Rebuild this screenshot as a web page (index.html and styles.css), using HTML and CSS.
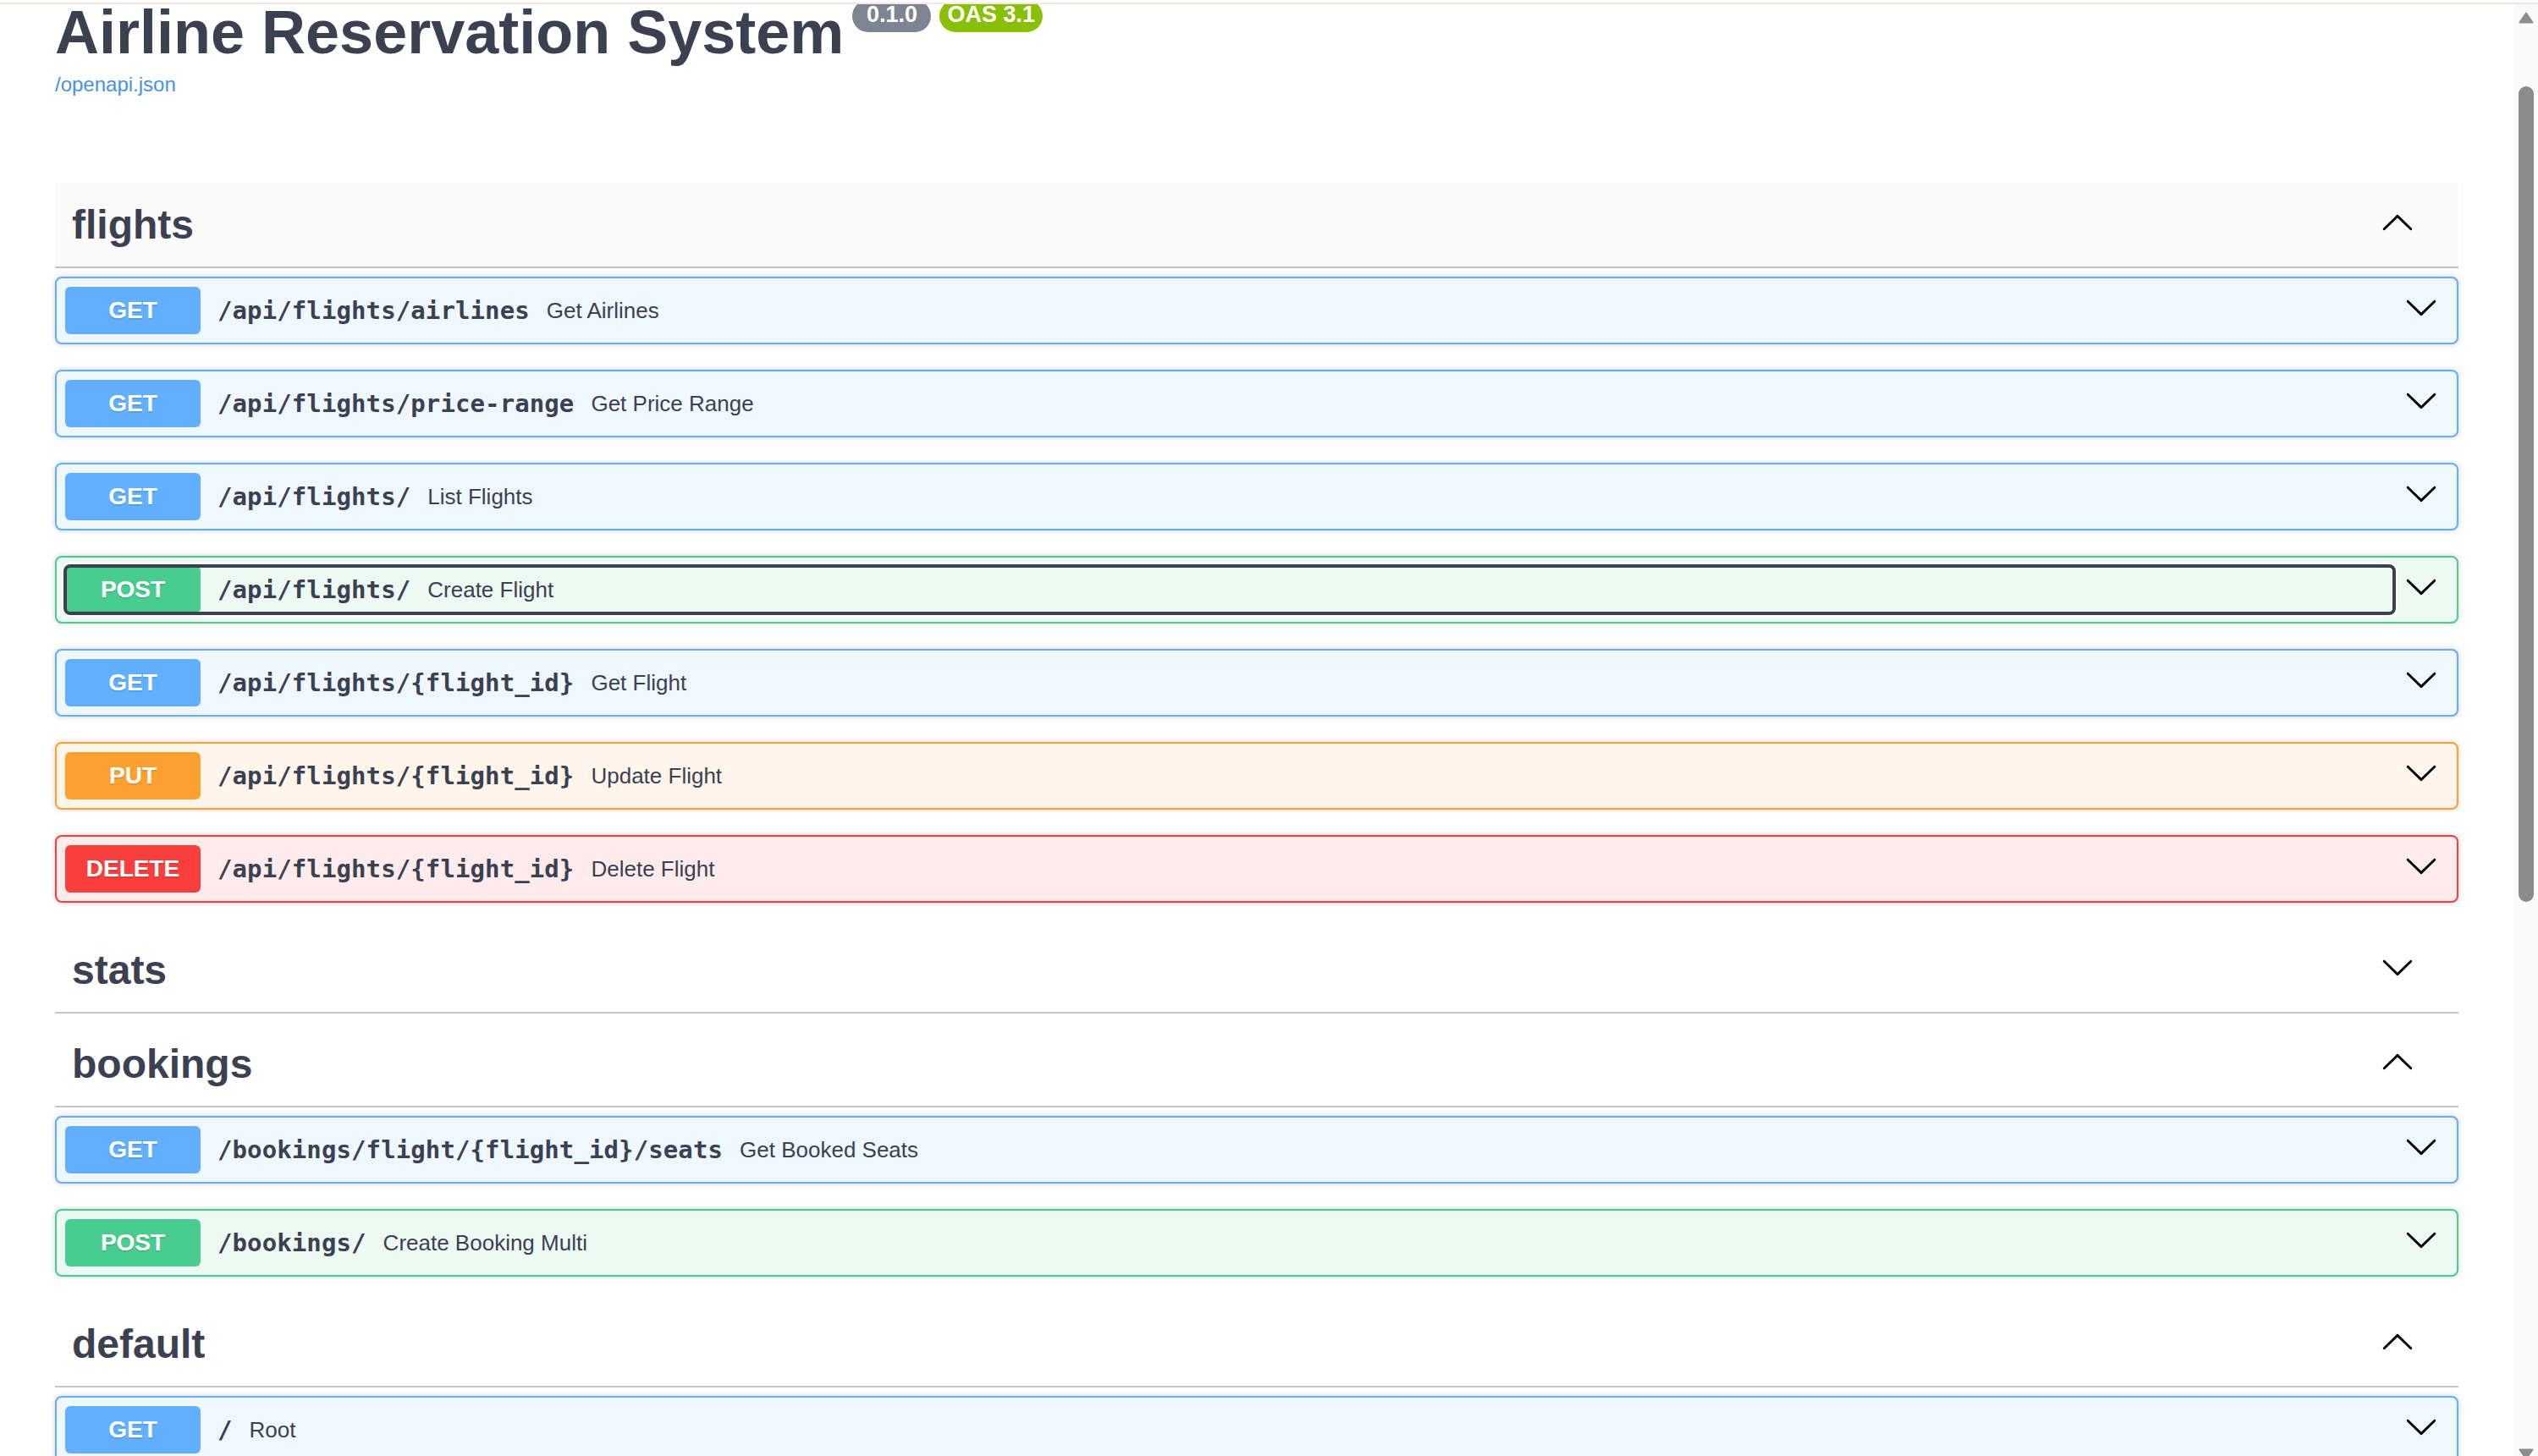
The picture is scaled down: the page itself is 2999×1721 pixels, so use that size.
FILE: index.html
```html
<!DOCTYPE html>
<html lang="en">
<head>
<meta charset="utf-8">
<title>Airline Reservation System - Swagger UI</title>
<link rel="stylesheet" href="styles.css">
</head>
<body>
<div class="topline"></div>
<div class="frame">
  <main class="page">
    <div class="wrapper">
      <div class="info">
        <div class="title-row">
          <h2 class="title">Airline Reservation System</h2>
          <span class="stamp stamp-version"><pre> 0.1.0 </pre></span>
          <span class="stamp stamp-oas"><pre>OAS 3.1</pre></span>
        </div>
        <a class="url" href="#">/openapi.json</a>
      </div>

      <section class="tag-section">
        <div class="tag tag-hover">
          <h3 class="tag-name">flights</h3>
          <span class="expand"><svg class="chev up" viewBox="0 0 20 20" width="40" height="40"><path d="M17.418 6.109c.272-.268.709-.268.979 0s.271.701 0 .969l-7.908 7.83c-.27.268-.707.268-.979 0l-7.908-7.830c-.27-.268-.27-.701 0-.969.271-.268.709-.268.979 0L10 13.25l7.418-7.141z"/></svg></span>
        </div>
        <div class="ops">
          <div class="opblock get">
            <div class="summary">
              <div class="control"><span class="method">GET</span><span class="path">/api/flights/airlines</span><span class="desc">Get Airlines</span></div>
              <span class="arrow"><svg viewBox="0 0 20 20" width="40" height="40"><path d="M17.418 6.109c.272-.268.709-.268.979 0s.271.701 0 .969l-7.908 7.83c-.27.268-.707.268-.979 0l-7.908-7.83c-.27-.268-.27-.701 0-.969.271-.268.709-.268.979 0L10 13.25l7.418-7.141z"/></svg></span>
            </div>
          </div>
          <div class="opblock get">
            <div class="summary">
              <div class="control"><span class="method">GET</span><span class="path">/api/flights/price-range</span><span class="desc">Get Price Range</span></div>
              <span class="arrow"><svg viewBox="0 0 20 20" width="40" height="40"><path d="M17.418 6.109c.272-.268.709-.268.979 0s.271.701 0 .969l-7.908 7.83c-.27.268-.707.268-.979 0l-7.908-7.83c-.27-.268-.27-.701 0-.969.271-.268.709-.268.979 0L10 13.25l7.418-7.141z"/></svg></span>
            </div>
          </div>
          <div class="opblock get">
            <div class="summary">
              <div class="control"><span class="method">GET</span><span class="path">/api/flights/</span><span class="desc">List Flights</span></div>
              <span class="arrow"><svg viewBox="0 0 20 20" width="40" height="40"><path d="M17.418 6.109c.272-.268.709-.268.979 0s.271.701 0 .969l-7.908 7.83c-.27.268-.707.268-.979 0l-7.908-7.83c-.27-.268-.27-.701 0-.969.271-.268.709-.268.979 0L10 13.25l7.418-7.141z"/></svg></span>
            </div>
          </div>
          <div class="opblock post">
            <div class="summary">
              <div class="control focused"><span class="method">POST</span><span class="path">/api/flights/</span><span class="desc">Create Flight</span></div>
              <span class="arrow"><svg viewBox="0 0 20 20" width="40" height="40"><path d="M17.418 6.109c.272-.268.709-.268.979 0s.271.701 0 .969l-7.908 7.83c-.27.268-.707.268-.979 0l-7.908-7.83c-.27-.268-.27-.701 0-.969.271-.268.709-.268.979 0L10 13.25l7.418-7.141z"/></svg></span>
            </div>
          </div>
          <div class="opblock get">
            <div class="summary">
              <div class="control"><span class="method">GET</span><span class="path">/api/flights/{flight_id}</span><span class="desc">Get Flight</span></div>
              <span class="arrow"><svg viewBox="0 0 20 20" width="40" height="40"><path d="M17.418 6.109c.272-.268.709-.268.979 0s.271.701 0 .969l-7.908 7.83c-.27.268-.707.268-.979 0l-7.908-7.83c-.27-.268-.27-.701 0-.969.271-.268.709-.268.979 0L10 13.25l7.418-7.141z"/></svg></span>
            </div>
          </div>
          <div class="opblock put">
            <div class="summary">
              <div class="control"><span class="method">PUT</span><span class="path">/api/flights/{flight_id}</span><span class="desc">Update Flight</span></div>
              <span class="arrow"><svg viewBox="0 0 20 20" width="40" height="40"><path d="M17.418 6.109c.272-.268.709-.268.979 0s.271.701 0 .969l-7.908 7.83c-.27.268-.707.268-.979 0l-7.908-7.83c-.27-.268-.27-.701 0-.969.271-.268.709-.268.979 0L10 13.25l7.418-7.141z"/></svg></span>
            </div>
          </div>
          <div class="opblock delete">
            <div class="summary">
              <div class="control"><span class="method">DELETE</span><span class="path">/api/flights/{flight_id}</span><span class="desc">Delete Flight</span></div>
              <span class="arrow"><svg viewBox="0 0 20 20" width="40" height="40"><path d="M17.418 6.109c.272-.268.709-.268.979 0s.271.701 0 .969l-7.908 7.83c-.27.268-.707.268-.979 0l-7.908-7.83c-.27-.268-.27-.701 0-.969.271-.268.709-.268.979 0L10 13.25l7.418-7.141z"/></svg></span>
            </div>
          </div>
        </div>
      </section>

      <section class="tag-section">
        <div class="tag">
          <h3 class="tag-name">stats</h3>
          <span class="expand"><svg class="chev down" viewBox="0 0 20 20" width="40" height="40"><path d="M17.418 6.109c.272-.268.709-.268.979 0s.271.701 0 .969l-7.908 7.83c-.27.268-.707.268-.979 0l-7.908-7.83c-.27-.268-.27-.701 0-.969.271-.268.709-.268.979 0L10 13.25l7.418-7.141z"/></svg></span>
        </div>
      </section>

      <section class="tag-section">
        <div class="tag">
          <h3 class="tag-name">bookings</h3>
          <span class="expand"><svg class="chev up" viewBox="0 0 20 20" width="40" height="40"><path d="M17.418 6.109c.272-.268.709-.268.979 0s.271.701 0 .969l-7.908 7.83c-.27.268-.707.268-.979 0l-7.908-7.83c-.27-.268-.27-.701 0-.969.271-.268.709-.268.979 0L10 13.25l7.418-7.141z"/></svg></span>
        </div>
        <div class="ops">
          <div class="opblock get">
            <div class="summary">
              <div class="control"><span class="method">GET</span><span class="path">/bookings/flight/{flight_id}/seats</span><span class="desc">Get Booked Seats</span></div>
              <span class="arrow"><svg viewBox="0 0 20 20" width="40" height="40"><path d="M17.418 6.109c.272-.268.709-.268.979 0s.271.701 0 .969l-7.908 7.83c-.27.268-.707.268-.979 0l-7.908-7.83c-.27-.268-.27-.701 0-.969.271-.268.709-.268.979 0L10 13.25l7.418-7.141z"/></svg></span>
            </div>
          </div>
          <div class="opblock post">
            <div class="summary">
              <div class="control"><span class="method">POST</span><span class="path">/bookings/</span><span class="desc">Create Booking Multi</span></div>
              <span class="arrow"><svg viewBox="0 0 20 20" width="40" height="40"><path d="M17.418 6.109c.272-.268.709-.268.979 0s.271.701 0 .969l-7.908 7.83c-.27.268-.707.268-.979 0l-7.908-7.83c-.27-.268-.27-.701 0-.969.271-.268.709-.268.979 0L10 13.25l7.418-7.141z"/></svg></span>
            </div>
          </div>
        </div>
      </section>

      <section class="tag-section">
        <div class="tag">
          <h3 class="tag-name">default</h3>
          <span class="expand"><svg class="chev up" viewBox="0 0 20 20" width="40" height="40"><path d="M17.418 6.109c.272-.268.709-.268.979 0s.271.701 0 .969l-7.908 7.83c-.27.268-.707.268-.979 0l-7.908-7.83c-.27-.268-.27-.701 0-.969.271-.268.709-.268.979 0L10 13.25l7.418-7.141z"/></svg></span>
        </div>
        <div class="ops">
          <div class="opblock get">
            <div class="summary">
              <div class="control"><span class="method">GET</span><span class="path">/</span><span class="desc">Root</span></div>
              <span class="arrow"><svg viewBox="0 0 20 20" width="40" height="40"><path d="M17.418 6.109c.272-.268.709-.268.979 0s.271.701 0 .969l-7.908 7.83c-.27.268-.707.268-.979 0l-7.908-7.83c-.27-.268-.27-.701 0-.969.271-.268.709-.268.979 0L10 13.25l7.418-7.141z"/></svg></span>
            </div>
          </div>
        </div>
      </section>
    </div>
  </main>
  <div class="scrollbar">
    <svg class="sb-arrow" viewBox="0 0 18 14" width="18" height="14"><path d="M9 1.5 L16.5 12.5 L1.5 12.5 Z"/></svg>
    <div class="sb-thumb"></div>
    <svg class="sb-arrow sb-down" viewBox="0 0 18 14" width="18" height="14"><path d="M1.5 1.5 L16.5 1.5 L9 12.5 Z"/></svg>
  </div>
</div>
</body>
</html>
```

FILE: styles.css
```css
html, body {
  margin: 0;
  padding: 0;
  height: 100%;
  overflow: hidden;
  background: #fff;
}

body {
  display: flex;
  flex-direction: column;
  font-family: "Liberation Sans", Arial, sans-serif;
  color: #3b4151;
}

.topline {
  flex: 0 0 auto;
  height: 3px;
  border-bottom: 2px solid #fbe3e3;
  background: #fff;
}

.frame {
  flex: 1 1 auto;
  display: flex;
  min-height: 0;
}

.page {
  flex: 1 1 auto;
  overflow: hidden;
  min-width: 0;
}

.wrapper {
  padding: 0 65px;
}

/* ---------- info ---------- */
.info {
  margin-top: -5px;
  margin-bottom: 102px;
}

.title-row {
  display: flex;
  align-items: flex-start;
}

.title {
  margin: 0;
  font-size: 72px;
  line-height: 76px;
  font-weight: 700;
  color: #3b4151;
  white-space: nowrap;
}

.stamp {
  display: inline-block;
  margin-left: 10px;
  padding: 0 9px 4px;
  border-radius: 57px;
  background: #7d8492;
}

.stamp pre {
  margin: 0;
  font-family: "Liberation Sans", Arial, sans-serif;
  font-size: 27px;
  line-height: 34px;
  font-weight: 700;
  color: #fff;
}

.stamp-oas {
  background: #89bf04;
}

.url {
  display: block;
  margin-top: 10px;
  font-size: 24px;
  line-height: 28px;
  color: #4990e2;
  text-decoration: none;
}

/* ---------- tag sections ---------- */
.tag {
  display: flex;
  align-items: center;
  padding: 20px 40px 20px 20px;
  margin-bottom: 10px;
  border-bottom: 2px solid rgba(59, 65, 81, 0.3);
}

.tag-hover {
  background: #fafafa;
}

.tag-name {
  flex: 1 1 auto;
  margin: 0;
  font-size: 48px;
  line-height: 59px;
  font-weight: 700;
  color: #3b4151;
}

.expand {
  display: flex;
  margin-right: 12px;
}

.chev {
  display: block;
  fill: #000;
  margin-bottom: 4px;
}

.chev.up {
  transform: rotate(180deg);
}

.chev.down {
  margin-bottom: 8px;
}

.ops {
  display: flex;
  flex-direction: column;
}

/* ---------- operation blocks ---------- */
.opblock {
  margin-bottom: 30px;
  border: 2px solid #000;
  border-radius: 8px;
  box-shadow: 0 0 6px rgba(0, 0, 0, 0.19);
}

.summary {
  display: flex;
  align-items: center;
  padding: 10px;
}

.control {
  flex: 1 1 auto;
  display: flex;
  align-items: center;
  min-width: 0;
  border-radius: 6px;
}

.control.focused {
  outline: 4px solid #3b4151;
  outline-offset: -2px;
  box-shadow: 0 0 0 4px #fff;
}

.method {
  flex: 0 0 auto;
  min-width: 160px;
  padding: 12px 0;
  border-radius: 6px;
  font-size: 28px;
  line-height: 32px;
  font-weight: 700;
  color: #fff;
  text-align: center;
  text-shadow: 0 2px 0 rgba(0, 0, 0, 0.1);
}

.path {
  padding: 0 20px;
  font-family: "DejaVu Sans Mono", "Liberation Mono", monospace;
  font-size: 29px;
  font-weight: 700;
  letter-spacing: 0.1px;
  color: #3b4151;
  white-space: nowrap;
}

.desc {
  font-size: 26px;
  color: #3b4151;
  white-space: nowrap;
}

.arrow {
  display: flex;
  padding: 0 12px;
}

.arrow svg {
  display: block;
  fill: #000;
  margin-bottom: 8px;
}

.opblock.get { border-color: #61affe; background: #eff7ff; }
.opblock.get .method { background: #61affe; }

.opblock.post { border-color: #49cc90; background: #edfaf4; }
.opblock.post .method { background: #49cc90; }

.opblock.put { border-color: #fca130; background: #fff5ea; }
.opblock.put .method { background: #fca130; }

.opblock.delete { border-color: #f93e3e; background: #feecec; }
.opblock.delete .method { background: #f93e3e; }

/* ---------- scrollbar ---------- */
.scrollbar {
  flex: 0 0 29px;
  display: flex;
  flex-direction: column;
  align-items: center;
  padding-top: 9px;
  background: #fafafa;
  overflow: hidden;
}

.sb-arrow {
  flex: 0 0 auto;
  display: block;
  fill: #8e8e8e;
  stroke: #8e8e8e;
  stroke-width: 2;
  stroke-linejoin: round;
}

.sb-thumb {
  flex: 0 0 964px;
  width: 18px;
  margin-top: 74px;
  border-radius: 9px;
  background: #8b8b8b;
}

.sb-down {
  margin-top: 646px;
}
```
